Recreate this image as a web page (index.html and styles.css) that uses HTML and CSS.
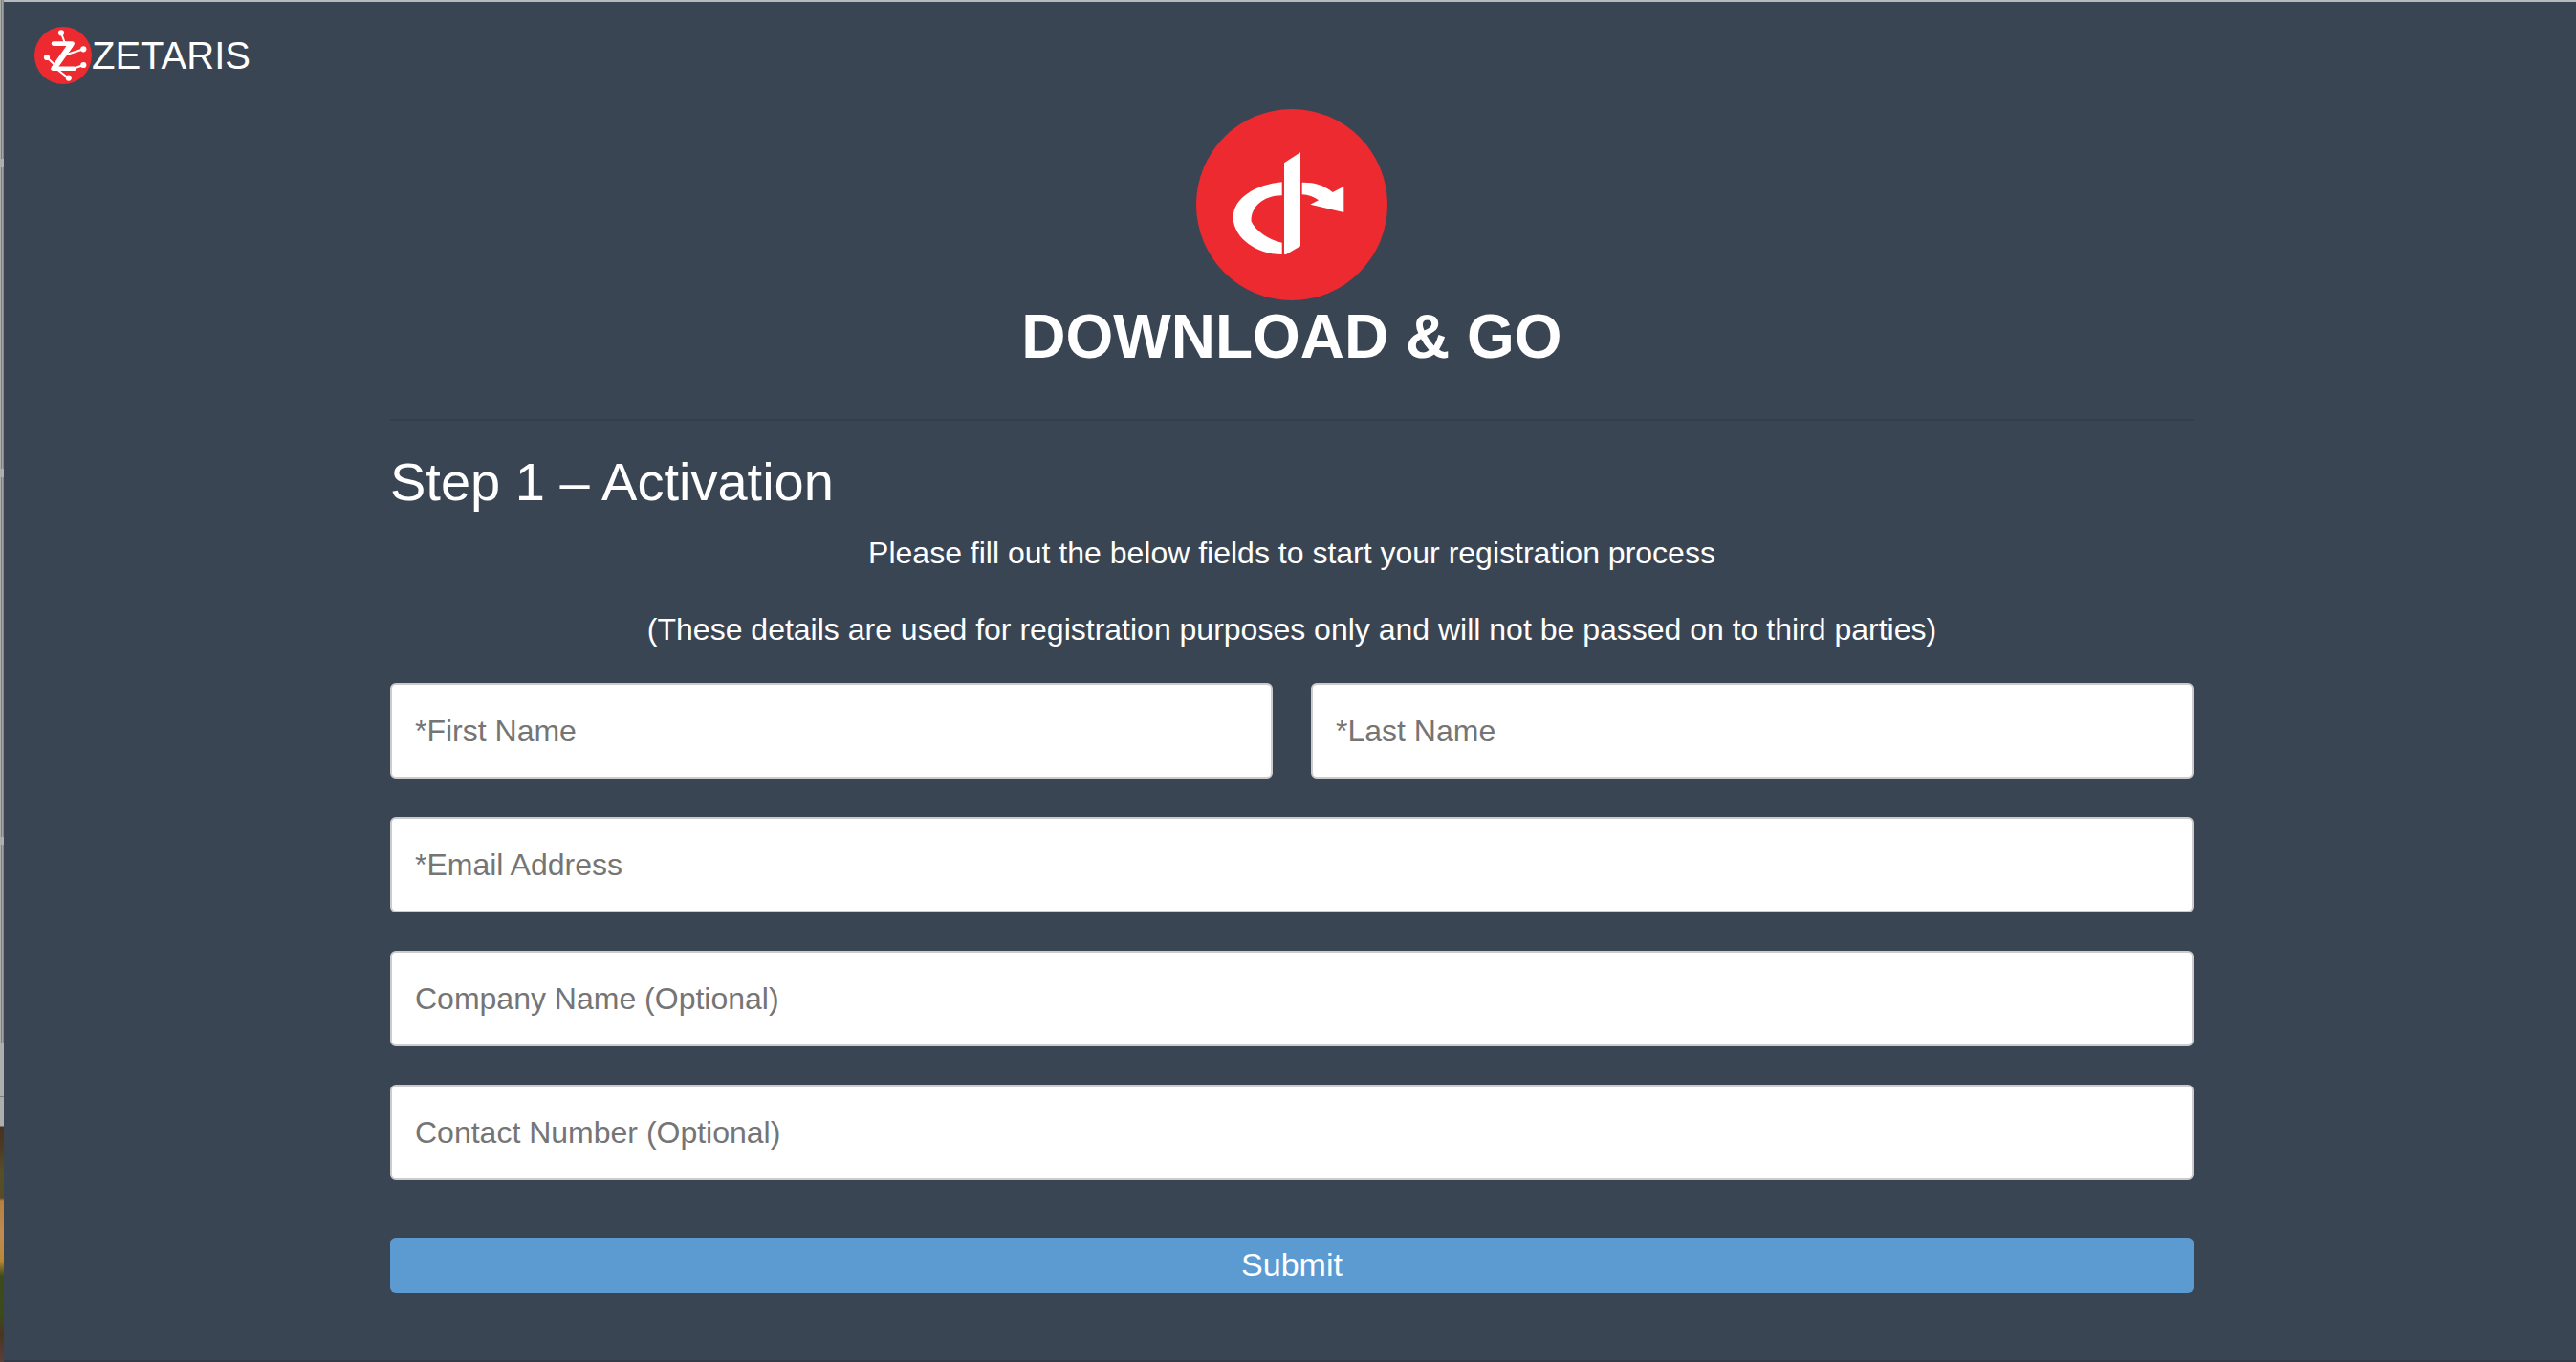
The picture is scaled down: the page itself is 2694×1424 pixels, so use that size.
FILE: index.html
```html
<!DOCTYPE html>
<html lang="en">
<head>
<meta charset="utf-8">
<meta name="viewport" content="width=device-width, initial-scale=1">
<title>Zetaris – Download &amp; Go</title>
<link rel="stylesheet" href="styles.css">
</head>
<body>
<div class="edge" aria-hidden="true"></div>
<div class="page">
  <header class="header">
    <a class="brand" href="#">
      <svg class="brand-logo" viewBox="0 0 60 60" aria-hidden="true">
        <circle cx="30" cy="30" r="30" fill="#ed2a30"/>
        <g fill="none" stroke="#fff" stroke-linecap="round" stroke-linejoin="round">
          <path stroke-width="4.6" d="M20 17.6H39.6L19.4 43.8H41.5"/>
          <path stroke-width="6" d="M37.5 19.5L21.5 42"/>
          <path stroke-width="2" d="M28 6.5L31.5 16M51.5 23.3L33 29.3M13 32L23 41.5M51.5 40L42 43.2M35.6 53.7L25 45.5"/>
        </g>
        <g fill="#fff">
          <circle cx="28" cy="6.3" r="3.1"/>
          <circle cx="51.3" cy="23.3" r="3.1"/>
          <circle cx="13" cy="32" r="3.1"/>
          <circle cx="51.3" cy="40" r="3.1"/>
          <circle cx="35.8" cy="53.6" r="3.1"/>
        </g>
      </svg>
      <span>ZETARIS</span>
    </a>
  </header>
  <main class="content">
    <div class="hero">
      <svg class="hero-icon" viewBox="0 0 200 200" aria-hidden="true">
        <circle cx="100" cy="100" r="100" fill="#ed2a30"/>
        <g fill="#fff">
          <path d="M89.7 76.3C62 79 38.7 93 38.7 113.3C38.7 134 62 152 89.7 152V139.7C75 136.5 62 127 57.6 117.5C57 103 69 90.5 89.7 90.3Z"/>
          <path d="M92 56.3L109 45.3V143.3L94 152H92Z"/>
          <path d="M110.7 76.7C123 76.5 134 79.5 142.7 87L154.3 81V108L119.3 99.7L128 95.3C122.5 91.5 117.5 89.7 110.7 89.3Z"/>
        </g>
      </svg>
      <h1 class="title">DOWNLOAD &amp; GO</h1>
    </div>
    <hr class="divider">
    <h2 class="step">Step 1 – Activation</h2>
    <p class="note">Please fill out the below fields to start your registration process</p>
    <p class="note">(These details are used for registration purposes only and will not be passed on to third parties)</p>
    <form class="form" action="#">
      <div class="row">
        <input class="field" type="text" aria-label="First Name" placeholder="*First Name">
        <input class="field" type="text" aria-label="Last Name" placeholder="*Last Name">
      </div>
      <input class="field" type="email" aria-label="Email Address" placeholder="*Email Address">
      <input class="field" type="text" aria-label="Company Name" placeholder="Company Name (Optional)">
      <input class="field" type="tel" aria-label="Contact Number" placeholder="Contact Number (Optional)">
      <button class="submit" type="submit">Submit</button>
    </form>
  </main>
</div>
</body>
</html>
```
FILE: styles.css
```css
*,
*::before,
*::after {
  box-sizing: border-box;
}

body {
  margin: 0;
  min-height: 100vh;
  display: flex;
  background: #3a4553;
  color: #fff;
  font-family: "Liberation Sans", Arial, Helvetica, sans-serif;
}

/* Sliver of the desktop left of the page */
.edge {
  flex: 0 0 4px;
  background:
    linear-gradient(transparent 1177px, #4a3026 1178px, #4d3a22 1200px, #55502a 1225px, #5a4a22 1253px, #b5813f 1256px, #c08a52 1290px, #b88a35 1318px, #3f4a1c 1334px, #3c4a1a 1375px, #4c3420 1395px, #5a4038 1424px),
    linear-gradient(transparent 166px, #acafac 166px 175px, transparent 175px 490px, #acafac 490px 499px, transparent 499px 875px, #acafac 875px 883px, transparent 883px 1090px, #acafac 1090px 1146px, #7b7e7c 1146px 1147px, #acafac 1147px),
    linear-gradient(90deg, #acafac 1px, #7b7e7c 1px 2px, #a0a3a0 2px 3px, #868987 3px);
}

.page {
  flex: 1;
  min-width: 0;
  border-top: 2px solid #b8bbbd;
  border-bottom: 2px solid #343b48;
}

.header {
  display: flex;
  padding: 26px 32px;
}

.brand {
  display: flex;
  align-items: center;
  color: inherit;
  font-size: 40px;
  line-height: 60px;
  text-decoration: none;
}

.brand-logo {
  width: 60px;
  height: 60px;
}

.content {
  padding: 0 400px 0 404px;
}

.hero {
  display: flex;
  flex-direction: column;
  align-items: center;
}

.hero-icon {
  width: 200px;
  height: 200px;
}

.title {
  margin: 0;
  font-size: 64px;
  line-height: 76px;
}

.divider {
  margin: 48px 0 30px;
  border: 0;
  border-top: 2px solid #343e4b;
}

.step {
  margin: 0 0 16px;
  font-size: 56px;
  font-weight: 400;
  line-height: 68px;
}

.note {
  margin: 0 0 32px;
  font-size: 32px;
  line-height: 48px;
  text-align: center;
}

.form {
  display: flex;
  flex-direction: column;
  gap: 40px;
}

.row {
  display: grid;
  grid-template-columns: 1fr 1fr;
  gap: 40px;
}

.field {
  width: 100%;
  height: 100px;
  padding: 0 24px;
  border: 2px solid #ccc;
  border-radius: 6px;
  background: #fff;
  color: #333;
  font: inherit;
  font-size: 32px;
}

.field::placeholder {
  color: #757575;
  opacity: 1;
}

.submit {
  height: 58px;
  margin-top: 20px;
  padding: 0 24px 2px;
  border: 0;
  border-radius: 6px;
  background: #5c9bd2;
  color: #fff;
  font: inherit;
  font-size: 34px;
}
```
